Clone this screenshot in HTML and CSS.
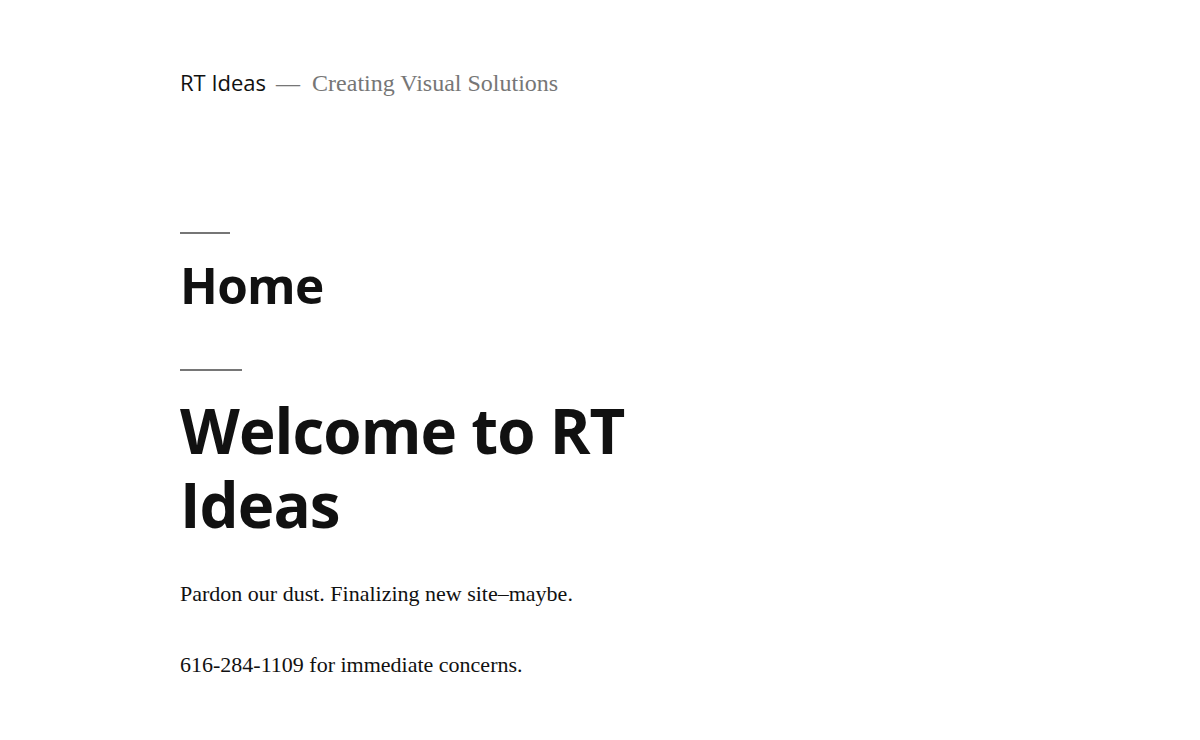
FILE: index.html
```
<!DOCTYPE html>
<html lang="en">
<head>
<meta charset="utf-8">
<title>RT Ideas – Creating Visual Solutions</title>
<link rel="stylesheet" href="styles.css">
</head>
<body>
<header class="site-header">
  <div class="site-branding">
    <p class="site-title">RT Ideas</p>
    <p class="site-description"><span class="sep">—</span>Creating Visual Solutions</p>
  </div>
</header>
<main class="site-main">
  <article class="entry">
    <header class="entry-header">
      <h1 class="entry-title">Home</h1>
    </header>
    <div class="entry-content">
      <h1 class="content-title">Welcome to RT Ideas</h1>
      <p>Pardon our dust. Finalizing new site–maybe.</p>
      <p>616-284-1109 for immediate concerns.</p>
    </div>
  </article>
</main>
</body>
</html>
```
FILE: styles.css
```
html, body {
  margin: 0;
  padding: 0;
  background: #fff;
}
body {
  font-family: "Liberation Serif", "Times New Roman", serif;
  font-size: 22px;
  line-height: 1.8;
  color: #111;
}
.site-header {
  padding: 69px 180px 0;
}
.site-branding {
  display: flex;
  align-items: baseline;
}
.site-title {
  margin: 0;
  font-family: "Open Sans", "Noto Sans", sans-serif;
  font-size: 22px;
  line-height: 1.2;
  font-weight: 400;
  color: #111;
}
.site-description {
  margin: 0;
  font-family: "Liberation Serif", "Times New Roman", serif;
  font-size: 24px;
  line-height: 1.2;
  color: #767676;
}
.sep {
  margin: 0 12px 0 10px;
}
.site-main {
  padding: 134px 180px 0;
}
.entry-header,
.entry-content > * {
  max-width: 572px;
}
.entry-title,
.content-title {
  font-family: "Open Sans", "Noto Sans", sans-serif;
  font-weight: 700;
  line-height: 1.2;
  color: #111;
  margin: 0;
  letter-spacing: -0.015em;
}
.entry-title::before,
.content-title::before {
  content: "";
  display: block;
  width: 1em;
  height: 2px;
  background: #767676;
  margin-bottom: 22px;
}
.entry-title {
  font-size: 49.5px;
}
.entry-content {
  padding-top: 54px;
}
.content-title {
  font-size: 61.875px;
}
.entry-content p {
  margin: 32px 0 0;
}
```
